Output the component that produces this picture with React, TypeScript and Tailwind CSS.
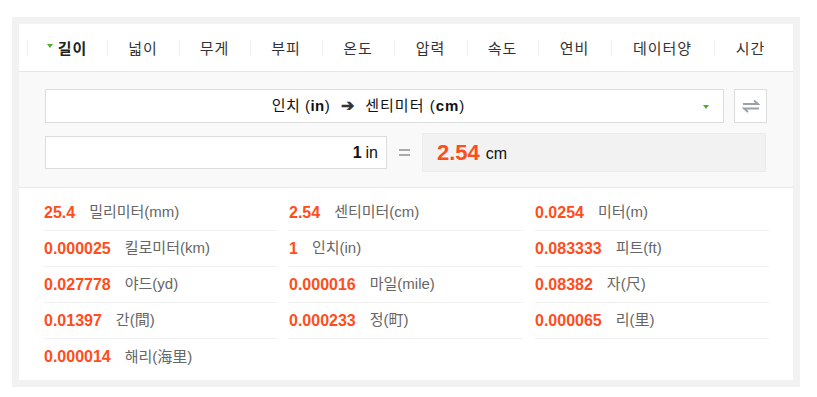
import React from "react";

const tabs: [string, string][] = [
  ["길이", "w-[80px]"],
  ["넓이", "w-[72px]"],
  ["무게", "w-[71px]"],
  ["부피", "w-[72px]"],
  ["온도", "w-[72px]"],
  ["압력", "w-[73px]"],
  ["속도", "w-[71px]"],
  ["연비", "w-[73px]"],
  ["데이터양", "w-[103px]"],
  ["시간", "w-[73px]"],
];

const rows: [string, string][] = [
  ["25.4", "밀리미터(mm)"],
  ["2.54", "센티미터(cm)"],
  ["0.0254", "미터(m)"],
  ["0.000025", "킬로미터(km)"],
  ["1", "인치(in)"],
  ["0.083333", "피트(ft)"],
  ["0.027778", "야드(yd)"],
  ["0.000016", "마일(mile)"],
  ["0.08382", "자(尺)"],
  ["0.01397", "간(間)"],
  ["0.000233", "정(町)"],
  ["0.000065", "리(里)"],
  ["0.000014", "해리(海里)"],
];

const font = { fontFamily: '"Liberation Sans", "Noto Sans CJK KR", sans-serif' };

export default function App() {
  return (
    <div className="w-[817px] h-[397px] bg-white pt-[17px] pl-[12px]" style={font}>
      <div className="w-[788px] h-[370px] bg-[#f2f2f2] p-[7px]">
        <div className="bg-white h-full flex flex-col">
          {/* tabs */}
          <div className="h-[48px] border-b border-[#e8e8e8] flex items-center pl-[8px] pt-[1px]">
            {tabs.map(([t, w], i) => (
              <div
                key={t}
                className={`relative shrink-0 whitespace-nowrap flex items-center justify-center h-[20px] ${w} text-[15px] tracking-[1px] text-[#333] leading-none`}
              >
                <span className="absolute left-0 top-[3px] h-[14px] w-px bg-[#ececec]" />
                {i === 0 && (
                  <svg width="6" height="5" viewBox="0 0 6 5" className="mr-[5px] -mt-[4px]">
                    <path d="M0 0 H6 L3 4 Z" fill="#4cae2a" />
                  </svg>
                )}
                <span className={i === 0 ? "font-bold text-[#222]" : ""}>{t}</span>
              </div>
            ))}
          </div>
          {/* converter */}
          <div className="bg-[#f9f9f9] h-[116px] border-b border-[#e8e8e8] pt-[17px] pl-[26px]">
            <div className="flex items-center">
              <div className="relative w-[679px] h-[34px] border border-[#dcdcdc] bg-white flex items-center justify-center pr-[32px] text-[15px] text-[#111]">
                <span className="tracking-[0.5px]">인치 (<b>in</b>)</span>
                <span className="mx-[11px] font-bold text-[#333] text-[16px]">➔</span>
                <span className="tracking-[1px]">센티미터 (<b>cm</b>)</span>
                <svg width="6" height="5" viewBox="0 0 6 5" className="absolute right-[14px] top-[15px]">
                  <path d="M0 0 H6 L3 4 Z" fill="#4cae2a" />
                </svg>
              </div>
              <div className="ml-[10px] w-[33px] h-[34px] border border-[#dcdcdc] bg-white flex items-center justify-center">
                <svg width="18" height="14" viewBox="0 0 18 14">
                  <path d="M1 5 H16 L12 1.5" fill="none" stroke="#9ba1a8" strokeWidth="2" />
                  <path d="M17 9.5 H2 L6 13" fill="none" stroke="#9ba1a8" strokeWidth="2" />
                </svg>
              </div>
            </div>
            <div className="flex items-center mt-[10px] h-[39px]">
              <div className="w-[342px] h-[33px] border border-[#dcdcdc] bg-white flex items-center justify-end pr-[8px] text-[16px] text-[#111]">
                <b>1</b>
                <span className="ml-[4px]">in</span>
              </div>
              <div className="w-[35px] flex items-center justify-center">
                <div className="w-[11px] flex flex-col gap-[3px]">
                  <div className="h-[2px] bg-[#aaa]" />
                  <div className="h-[2px] bg-[#aaa]" />
                </div>
              </div>
              <div className="w-[344px] h-[39px] bg-[#f2f2f2] border border-[#ebebeb] flex items-center pl-[14px]">
                <span className="text-[22px] font-bold text-[#ff4d1c]">2.54</span>
                <span className="ml-[6px] text-[16px] text-[#111] mt-[2px]">cm</span>
              </div>
            </div>
          </div>
          {/* results */}
          <div className="pl-[25px] pt-[7px] grid grid-cols-[233px_234px_234px] gap-x-[12px]">
            {rows.map(([n, l], i) => (
              <div
                key={l}
                className={`h-[36px] flex items-center ${i < 12 ? "border-b border-[#f0f0f0]" : ""}`}
              >
                <span className="font-bold text-[16px] text-[#ff4d1c]">{n}</span>
                <span className="ml-[14px] text-[15px] text-[#666]">{l}</span>
              </div>
            ))}
          </div>
        </div>
      </div>
    </div>
  );
}
